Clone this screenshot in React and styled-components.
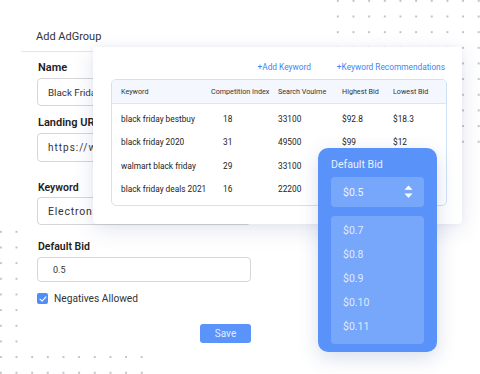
import React from "react";
import styled, { createGlobalStyle } from "styled-components";

const Global = createGlobalStyle`
  html, body { margin: 0; padding: 0; background: #fff; }
  body { font-family: Roboto, "Liberation Sans", Arial, sans-serif; }
`;

const Page = styled.div`
  position: relative;
  width: 480px;
  height: 374px;
  overflow: hidden;
  background: #fff;
  padding: 20px 0 0 21px;
  box-sizing: border-box;
`;

const Dots = styled.div`
  position: absolute;
  left: ${(p) => p.$left}px;
  top: ${(p) => p.$top}px;
  width: ${(p) => p.$w}px;
  height: ${(p) => p.$h}px;
  background-image: radial-gradient(circle, #bfc3c9 0.9px, transparent 1.4px);
  background-size: 15.67px 15.67px;
  z-index: 0;
`;

const FormPanel = styled.div`
  position: relative;
  z-index: 1;
  width: 272px;
  height: 330px;
  background: #fff;
  display: flex;
  flex-direction: column;
`;

const Header = styled.div`
  height: 32px;
  display: flex;
  align-items: center;
  padding-left: 15px;
  font-size: 11px;
  color: #333;
  border-bottom: 1.5px solid #e6e6e6;
  padding-top: 1px;
  box-sizing: border-box;
`;

const Fields = styled.div`
  display: flex;
  flex-direction: column;
  padding: 0 0 0 16px;
`;

const Label = styled.div`
  font-size: ${(p) => p.$size || 11}px;
  font-weight: 600;
  color: #222;
  line-height: 16px;
  margin-top: ${(p) => p.$mt}px;
  margin-bottom: ${(p) => p.$mb || 2}px;
  padding-left: 1px;
`;

const Input = styled.div`
  height: ${(p) => p.$h || 28}px;
  width: 214px;
  box-sizing: border-box;
  border: 1px solid #d6d6d6;
  border-radius: 4px;
  display: flex;
  align-items: center;
  padding-left: ${(p) => p.$pl || 10}px;
  font-size: ${(p) => p.$fs || 11}px;
  letter-spacing: ${(p) => p.$ls || 0}px;
  color: #333;
  white-space: nowrap;
  overflow: hidden;
`;

const CheckRow = styled.div`
  display: flex;
  align-items: center;
  gap: 6px;
  margin-top: 11px;
  font-size: 10.2px;
  color: #333;
`;

const Box = styled.span`
  width: 11px;
  height: 11px;
  border-radius: 2px;
  background: #4f8ef8;
  display: flex;
  align-items: center;
  justify-content: center;
`;

const SaveRow = styled.div`
  display: flex;
  justify-content: flex-end;
  width: 214px;
  margin-top: 20px;
`;

const SaveButton = styled.button`
  width: 51px;
  height: 19px;
  border: none;
  border-radius: 3px;
  background: #5a93f9;
  color: #e4edff;
  font-family: Roboto, sans-serif;
  font-size: 10px;
  padding: 0;
`;

const Card = styled.div`
  position: absolute;
  left: 93px;
  top: 47px;
  width: 369px;
  height: 177px;
  box-sizing: border-box;
  background: #fff;
  border-radius: 4px;
  box-shadow: 0 6px 22px rgba(40, 60, 130, 0.12), 0 0 6px rgba(40, 60, 130, 0.05);
  padding: 13px 15px 0 18px;
  z-index: 2;
`;

const LinkRow = styled.div`
  display: flex;
  justify-content: flex-end;
  gap: 26px;
  height: 13px;
  align-items: center;
  padding-right: 2px;
  margin-bottom: 6px;
`;

const LinkText = styled.span`
  color: #3d86f5;
  font-size: 8.3px;
`;

const Table = styled.div`
  border: 1px solid #cfe2f6;
  border-radius: 5px;
  overflow: hidden;
`;

const cols = "90px 67px 64px 51px 1fr";

const HeadRow = styled.div`
  display: grid;
  grid-template-columns: ${cols};
  padding-left: 9px;
  height: 23px;
  align-items: center;
  background: #f4f8fe;
  border-bottom: 1px solid #d6e7f8;
  font-size: 7.2px;
  line-height: 10px;
  color: #333;
  white-space: nowrap;
`;

const Body = styled.div`
  padding: 4px 0;
`;

const Row = styled.div`
  display: grid;
  grid-template-columns: ${cols};
  padding-left: 9px;
  height: 23.3px;
  align-items: center;
  font-size: 8.3px;
  line-height: 11px;
  color: #222;
  white-space: nowrap;
`;

const Cell = styled.span`
  padding-left: ${(p) => p.$pl || 0}px;
`;

const Dropdown = styled.div`
  position: absolute;
  left: 318px;
  top: 148px;
  width: 119px;
  height: 204px;
  box-sizing: border-box;
  background: #5993f9;
  border-radius: 10px;
  box-shadow: 0 6px 20px rgba(40, 70, 150, 0.18);
  padding: 9px 13px 0;
  z-index: 3;
  display: flex;
  flex-direction: column;
`;

const DropTitle = styled.div`
  font-size: 10.6px;
  color: #eaf1ff;
  line-height: 16px;
  margin-bottom: 4px;
`;

const Select = styled.div`
  height: 30px;
  border-radius: 4px;
  background: #77a7fb;
  display: flex;
  align-items: center;
  justify-content: space-between;
  padding: 0 11px 0 12px;
  font-size: 10.5px;
  color: #eef3ff;
`;

const List = styled.div`
  margin-top: 9px;
  border-radius: 4px;
  background: #77a7fb;
  padding: 2px 0 5px;
`;

const Item = styled.div`
  height: 24.2px;
  display: flex;
  align-items: center;
  padding-left: 12px;
  font-size: 10.5px;
  color: #dfe9ff;
`;

const rows = [
  ["black friday bestbuy", "18", "33100", "$92.8", "$18.3"],
  ["black friday 2020", "31", "49500", "$99", "$12"],
  ["walmart black friday", "29", "33100", "", ""],
  ["black friday deals 2021", "16", "22200", "", ""],
];

export default function App() {
  return (
    <>
      <Global />
      <Page>
        <Dots $left={329.7} $top={-6.8} $w={157} $h={157} />
        <Dots $left={-6.8} $top={224.2} $w={157} $h={157} />
        <FormPanel>
          <Header>Add AdGroup</Header>
          <Fields>
            <Label $mt={8}>Name</Label>
            <Input $fs={9.8}>Black Friday Sale</Input>
            <Label $mt={9}>Landing URL</Label>
            <Input $h={29} $fs={10} $ls={1}>https://www.example.com</Input>
            <Label $mt={18} $size={10.5} $mb={1}>Keyword</Label>
            <Input $fs={10.5} $ls={0.8}>Electronics</Input>
            <Label $mt={14} $size={10.5} $mb={2}>Default Bid</Label>
            <Input $h={25} $fs={9} $pl={15}>0.5</Input>
            <CheckRow>
              <Box>
                <svg width="8" height="8" viewBox="0 0 8 8">
                  <path d="M1 4.2 L3.1 6.2 L7 1.8" fill="none" stroke="#fff" strokeWidth="1.1" strokeLinecap="round" strokeLinejoin="round" />
                </svg>
              </Box>
              Negatives Allowed
            </CheckRow>
            <SaveRow>
              <SaveButton>Save</SaveButton>
            </SaveRow>
          </Fields>
        </FormPanel>

        <Card>
          <LinkRow>
            <LinkText>+Add Keyword</LinkText>
            <LinkText>+Keyword Recommendations</LinkText>
          </LinkRow>
          <Table>
            <HeadRow>
              <span>Keyword</span>
              <span>Competition Index</span>
              <span>Search Voulme</span>
              <span>Highest Bid</span>
              <span>Lowest Bid</span>
            </HeadRow>
            <Body>
              {rows.map((r) => (
                <Row key={r[0]}>
                  <Cell>{r[0]}</Cell>
                  <Cell $pl={12}>{r[1]}</Cell>
                  <Cell>{r[2]}</Cell>
                  <Cell>{r[3]}</Cell>
                  <Cell>{r[4]}</Cell>
                </Row>
              ))}
            </Body>
          </Table>
        </Card>

        <Dropdown>
          <DropTitle>Default Bid</DropTitle>
          <Select>
            <span>$0.5</span>
            <svg width="9" height="14" viewBox="0 0 9 14">
              <path d="M4.5 0.5 L8.5 4.8 L0.5 4.8 Z" fill="#fff" />
              <path d="M0.5 8.5 L8.5 8.5 L4.5 13 Z" fill="#fff" />
            </svg>
          </Select>
          <List>
            {["$0.7", "$0.8", "$0.9", "$0.10", "$0.11"].map((v) => (
              <Item key={v}>{v}</Item>
            ))}
          </List>
        </Dropdown>
      </Page>
    </>
  );
}
